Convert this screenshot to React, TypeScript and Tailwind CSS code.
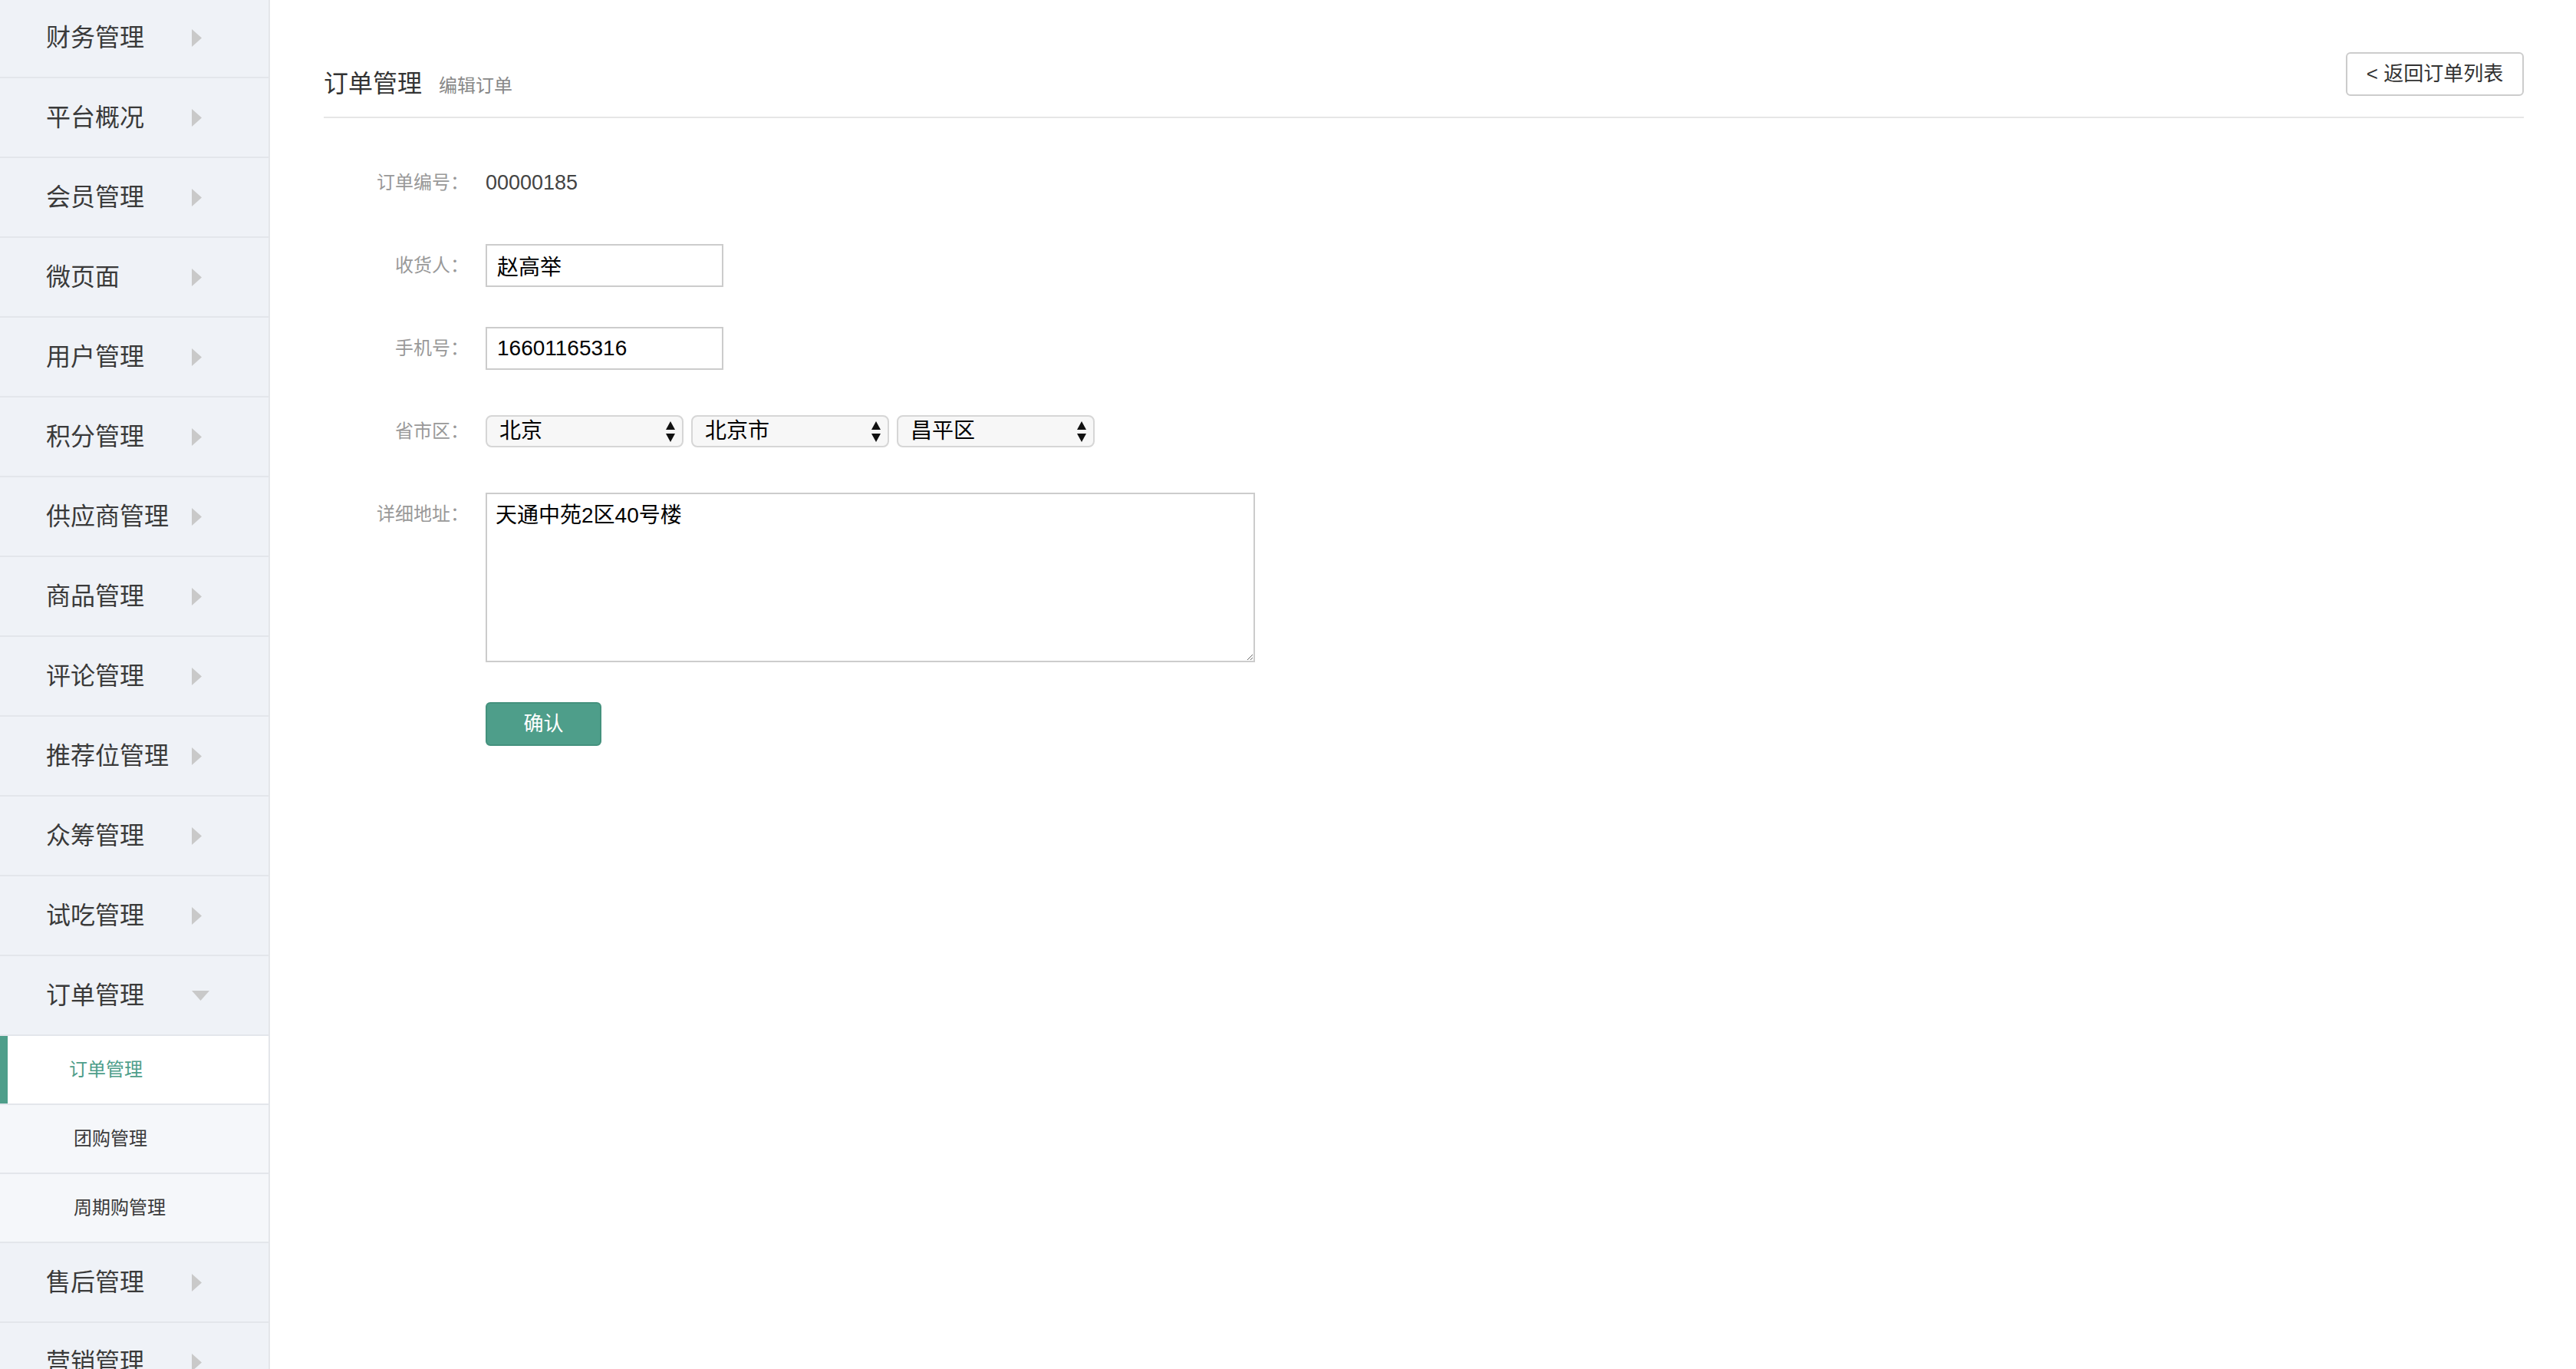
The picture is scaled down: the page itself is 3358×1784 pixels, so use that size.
import React from 'react'

const menus = ['财务管理', '平台概况', '会员管理', '微页面', '用户管理', '积分管理', '供应商管理', '商品管理', '评论管理', '推荐位管理', '众筹管理', '试吃管理']
const subMenus = ['订单管理', '团购管理', '周期购管理']

const ArrowRight = () => (
  <svg width="13" height="23" viewBox="0 0 13 23" className="shrink-0">
    <polygon points="0,0 13,11.5 0,23" fill="#c9c9c9" />
  </svg>
)

const ArrowDown = () => (
  <svg width="23" height="13" viewBox="0 0 23 13" className="shrink-0">
    <polygon points="0,0 23,0 11.5,13" fill="#c9c9c9" />
  </svg>
)

const MenuItem = ({ label, open }: { label: string; open?: boolean }) => (
  <div className="h-[104px] flex items-center border-b-2 border-[#e3e6eb] pl-[60px]">
    <span className="w-[190px] text-[32px] leading-none text-[#3a3a3a]">{label}</span>
    {open ? <ArrowDown /> : <ArrowRight />}
  </div>
)

const Select = ({ value }: { value: string }) => (
  <div className="h-[42px] w-[258px] rounded-[8px] border-2 border-[#d6d6d6] bg-[#f7f7f7] flex items-center justify-between pl-[16px] pr-[9px]">
    <span className="text-[28px] leading-none text-black">{value}</span>
    <svg width="12" height="27" viewBox="0 0 12 27">
      <polygon points="6,0 12,11 0,11" fill="#111" />
      <polygon points="0,16 12,16 6,27" fill="#111" />
    </svg>
  </div>
)

const Label = ({ text, top }: { text: string; top?: boolean }) => (
  <div className={`w-[189px] shrink-0 text-right text-[24px] leading-[32px] text-[#999] ${top ? 'pt-[12px]' : ''}`}>{text}</div>
)

export default function App() {
  return (
    <div className="h-[1784px] overflow-hidden flex bg-white font-['Liberation_Sans','Noto_Sans_CJK_SC',sans-serif]">
      <aside className="w-[352px] shrink-0 h-full bg-[#eff2f7] border-r-2 border-[#e4e6ea] overflow-hidden">
        <div className="-mt-[2px]">
          {menus.map(m => <MenuItem key={m} label={m} />)}
          <MenuItem label="订单管理" open />
          {subMenus.map((s, i) => (
            <div key={s} className={`h-[90px] flex items-center border-b-2 border-[#e3e6eb] ${i === 0 ? 'bg-white' : 'bg-[#f5f7fa]'}`}>
              {i === 0 ? (
                <>
                  <div className="w-[10px] h-full bg-[#4e9e8a]" />
                  <span className="pl-[80px] text-[24px] leading-none text-[#4e9e8a]">{s}</span>
                </>
              ) : (
                <span className="pl-[96px] text-[24px] leading-none text-[#3a3a3a]">{s}</span>
              )}
            </div>
          ))}
          <MenuItem label="售后管理" />
          <MenuItem label="营销管理" />
        </div>
      </aside>

      <main className="flex-1 pl-[70px] pr-[68px]">
        <div className="pt-[68px] pb-[27px] flex items-end justify-between border-b-2 border-[#e6e6e6]">
          <div className="flex items-baseline gap-[22px]">
            <span className="text-[32px] leading-none text-[#333]">订单管理</span>
            <span className="text-[24px] leading-none text-[#888]">编辑订单</span>
          </div>
          <button className="h-[57px] w-[232px] rounded-[6px] border-2 border-[#cccccc] bg-white text-[26px] text-[#333]">
            &lt; 返回订单列表
          </button>
        </div>

        <div className="pt-[56px] flex flex-col gap-[52px]">
          <div className="h-[56px] flex items-center">
            <Label text="订单编号：" />
            <span className="ml-[22px] text-[27px] text-[#444]">00000185</span>
          </div>
          <div className="h-[56px] flex items-center">
            <Label text="收货人：" />
            <input
              readOnly
              value="赵高举"
              className="ml-[22px] h-[56px] w-[310px] border-2 border-[#cccccc] px-[13px] text-[28px] text-black outline-none"
            />
          </div>
          <div className="h-[56px] flex items-center">
            <Label text="手机号：" />
            <input
              readOnly
              value="16601165316"
              className="ml-[22px] h-[56px] w-[310px] border-2 border-[#cccccc] px-[13px] text-[28px] text-black outline-none"
            />
          </div>
          <div className="h-[56px] flex items-center">
            <Label text="省市区：" />
            <div className="ml-[22px] flex gap-[10px]">
              <Select value="北京" />
              <Select value="北京市" />
              <Select value="昌平区" />
            </div>
          </div>
          <div className="flex items-start">
            <Label text="详细地址：" top />
            <textarea
              readOnly
              defaultValue="天通中苑2区40号楼"
              className="ml-[22px] h-[221px] w-[1003px] border-2 border-[#cccccc] pl-[11px] pt-[12px] text-[28px] leading-[32px] text-black outline-none"
            />
          </div>
          <div className="pl-[211px]">
            <button className="h-[57px] w-[151px] rounded-[6px] border-2 border-[#44917d] bg-[#4e9e8a] text-[26px] text-white">
              确认
            </button>
          </div>
        </div>
      </main>
    </div>
  )
}
